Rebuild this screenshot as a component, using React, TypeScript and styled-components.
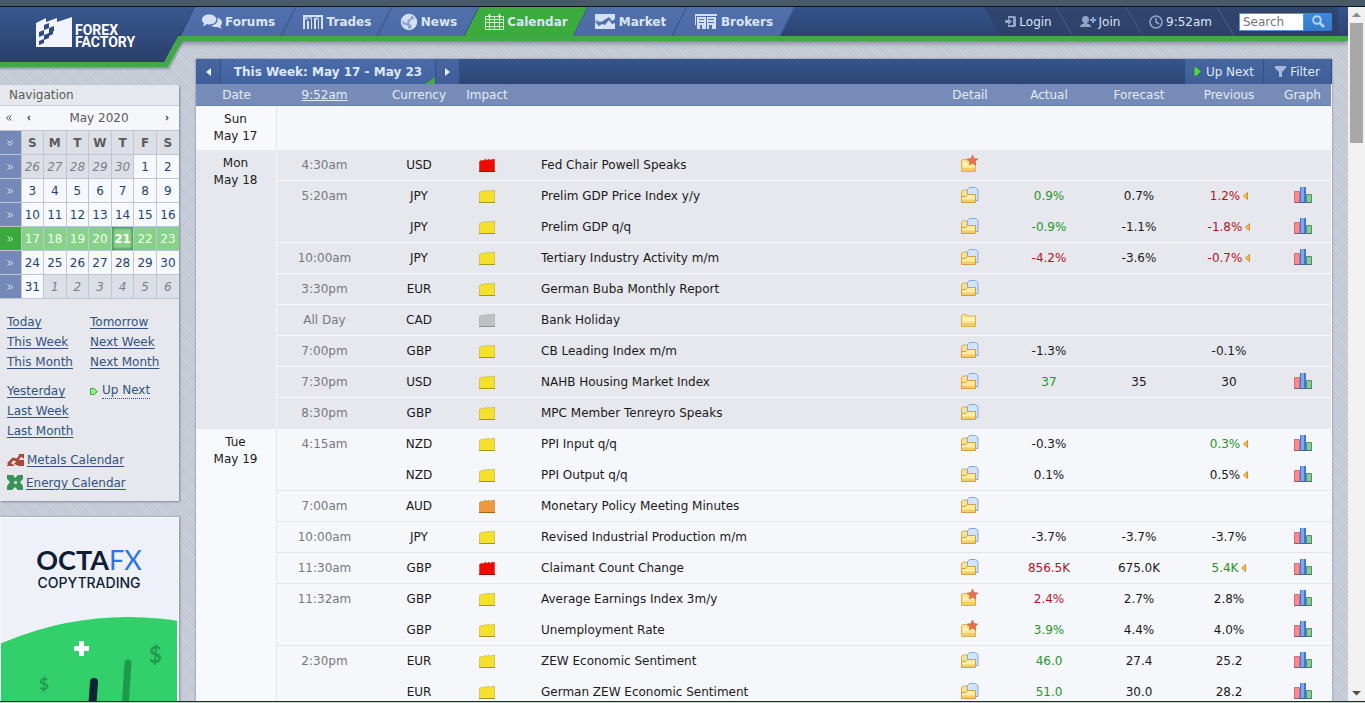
import React from "react";
import styled, { createGlobalStyle, css } from "styled-components";

const Global = createGlobalStyle`
  *, *::before, *::after { box-sizing: border-box; }
  body { margin: 0; }
  body, button, input, table { font-family: Verdana, "DejaVu Sans", sans-serif; font-size: 12px; }
  button { border: 0; padding: 0; background: none; color: inherit; cursor: pointer; }
  a { color: inherit; }
  svg { display: block; flex: none; }
`;

/* ---------- window frame ---------- */

const Frame = styled.div`
  display: flex;
  flex-direction: column;
  height: 100vh;
  overflow: hidden;
`;
const TopStrip = styled.div`
  flex: none;
  height: 7px;
  background: #475a66;
  border-bottom: 1px solid #0c1420;
`;
const BottomStrip = styled.div`
  flex: none;
  height: 2px;
  background: #c9d3cb;
  border-top: 1px solid #17331f;
`;
const Middle = styled.div`
  flex: 1;
  min-height: 0;
  display: flex;
`;
const Page = styled.div`
  flex: 1;
  min-width: 0;
  overflow: hidden;
  background: repeating-linear-gradient(45deg, #c2c9d4 0 2px, #ccd1da 2px 3px);
`;
const ScrollTrack = styled.div`
  flex: none;
  width: 17px;
  padding: 5px 2px;
  background: #f1f1f1;
  display: flex;
  flex-direction: column;
  align-items: center;
  gap: 5px;
`;
const ScrollThumb = styled.div`
  width: 13px;
  height: 120px;
  margin-bottom: auto;
  background: #a8a8a8;
`;

/* ---------- header ---------- */

const Header = styled.header`
  display: flex;
  align-items: flex-start;
  height: 34px;
  background: linear-gradient(#34538b, #2c4373);
  border-bottom: 5px solid #40a845;
  box-shadow: 0 2px 5px rgba(40, 50, 70, 0.5);
`;
const LogoLink = styled.a`
  position: relative;
  z-index: 2;
  display: grid;
  flex: none;
  width: 196px;
  height: 64px;
  color: #fff;
  text-decoration: none;
  & > * { grid-area: 1 / 1; }
`;
const LogoContent = styled.span`
  display: flex;
  align-items: flex-start;
  gap: 3px;
  padding: 10px 0 0 36px;
`;
const LogoName = styled.span`
  display: flex;
  flex-direction: column;
  margin-top: 7px;
  font: 700 14px/12px Roboto, sans-serif;
`;
const Nav = styled.nav`
  display: flex;
  height: 29px;
  margin-left: -8px;
`;
const Tab = styled.a<{ $w: number; $active?: boolean }>`
  position: relative;
  z-index: 1;
  display: flex;
  align-items: center;
  justify-content: center;
  gap: 3px;
  width: ${(p) => p.$w}px;
  color: #dbe6f8;
  font-weight: 700;
  text-decoration: none;
  &::before {
    content: "";
    position: absolute;
    inset: 0;
    z-index: -1;
    transform: skewX(-27deg);
    background: ${(p) => (p.$active ? "#3aab3c" : "linear-gradient(#5070ac, #4c6aa5)")};
    border-right: 1px solid #3d5993;
  }
`;
const UserArea = styled.div`
  position: relative;
  z-index: 1;
  display: flex;
  height: 29px;
  margin-left: auto;
  margin-right: 10px;
  color: #dbe6f8;
  background: linear-gradient(#30466f, #2d4069) no-repeat right / calc(100% - 12px) 100%;
`;
const UserItem = styled.a<{ $w: number }>`
  position: relative;
  z-index: 1;
  display: flex;
  align-items: center;
  justify-content: center;
  gap: 3px;
  width: ${(p) => p.$w}px;
  text-decoration: none;
  &::before {
    content: "";
    position: absolute;
    inset: 0;
    z-index: -1;
    transform: skewX(30deg);
    background: linear-gradient(#30466f, #2d4069);
    border-right: 1px solid #4d638f;
  }
`;
const Search = styled.form`
  position: relative;
  z-index: 1;
  display: flex;
  align-items: center;
  padding: 0 6px 0 13px;
`;
const SearchInput = styled.input`
  width: 65px;
  height: 18px;
  padding: 0 3px;
  border: 1px solid #5d93d6;
  background: #fff;
  &::placeholder { color: #757575; }
`;
const SearchButton = styled.button`
  width: 28px;
  height: 18px;
  display: grid;
  place-items: center;
  background: linear-gradient(#3f8ade, #3478cb);
  border-radius: 0 2px 2px 0;
`;

/* ---------- layout ---------- */

const Columns = styled.div`
  display: flex;
  align-items: flex-start;
  gap: 17px;
  padding-right: 16px;
`;
const Sidebar = styled.aside`
  flex: none;
  width: 179px;
  margin-top: 44px;
  display: flex;
  flex-direction: column;
  gap: 16px;
`;
const Main = styled.main`
  flex: 1;
  min-width: 0;
  margin-top: 18px;
  box-shadow: 0 0 2px rgba(50, 65, 100, 0.6);
`;

/* ---------- sidebar ---------- */

const Box = styled.section`
  background: #e6e8ed;
  box-shadow: 1px 1px 2px rgba(60, 70, 100, 0.5);
  color: #5a5a5a;
`;
const BoxTitle = styled.h2`
  margin: 0;
  padding: 0 9px;
  height: 21px;
  font-size: 12px;
  line-height: 20px;
  font-weight: 400;
  border-bottom: 1px solid #c6cad3;
`;
const MonthBar = styled.div`
  display: flex;
  align-items: center;
  height: 24px;
  padding: 0 6px 0 5px;
  background: #f6f7fa;
  color: #35506f;
`;
const MonthName = styled.span`
  flex: 1;
  text-align: center;
  color: #5a5a5a;
`;
const StepButton = styled.button`
  width: 10px;
  height: 20px;
  & + & { margin-left: 10px; }
`;
const MiniTable = styled.table`
  width: 100%;
  table-layout: fixed;
  border-collapse: collapse;
  text-align: center;
`;
const DayHead = styled.th`
  height: 24px;
  padding: 0;
  background: #dcdfe6;
  border: 1px solid #bfc5d5;
  border-right: 0;
`;
const WeekCell = styled.td<{ $on?: boolean }>`
  width: 21px;
  height: 24px;
  padding: 0;
  color: #dfe8f8;
  background: ${(p) => (p.$on ? "#38a93a" : "#7489b7")};
  border-top: 1px solid #bfc5d5;
  border-bottom: 1px solid #bfc5d5;
`;
const DayCell = styled.td<{ $kind: "out" | "in" | "week" | "today" }>`
  height: 24px;
  padding: 0;
  border: 1px solid #bfc5d5;
  border-right: 0;
  background: #f6f8fc;
  color: #1f4470;
  ${(p) => p.$kind === "out" && css`background: #dcdfe6; color: #7c7f86; font-style: italic;`}
  ${(p) => p.$kind === "week" && css`background: #87d287; color: #f2fff0;`}
  ${(p) => p.$kind === "today" && css`background: #87d287; color: #fff; font-weight: 700; box-shadow: inset 0 0 3px 1px #3f8b45;`}
`;
const CellButton = styled.button`
  display: grid;
  place-items: center;
  width: 100%;
  height: 23px;
  font-style: inherit;
  font-weight: inherit;
`;
const Links = styled.div`
  display: grid;
  grid-template-columns: 83px 1fr;
  align-items: start;
  row-gap: 9px;
  padding: 13px 0 0 7px;
  color: #33527f;
`;
const LinkList = styled.div`
  display: flex;
  flex-direction: column;
  align-items: flex-start;
  line-height: 20px;
  a { white-space: nowrap; text-underline-offset: 2px; }
`;
const Partners = styled.div`
  display: flex;
  flex-direction: column;
  padding: 7px;
  color: #33527f;
`;
const IconLink = styled.span`
  display: flex;
  align-items: center;
  gap: 3px;
  height: 23px;
  a { text-underline-offset: 2px; }
`;
const DottedLink = styled.a`
  line-height: 15px;
  text-decoration: none;
  border-bottom: 1px dotted #33527f;
`;
const NextRow = styled.div`
  display: flex;
  align-items: center;
  gap: 4px;
  height: 20px;
`;
const Ad = styled.a`
  display: flex;
  flex-direction: column;
  padding: 28px 1px 0 0;
  background: #eef2f8;
  border: solid #f6f8fb;
  border-width: 1px 1px 0 1px;
  box-shadow: 1px 0 2px rgba(60, 70, 100, 0.5);
  text-align: center;
  text-decoration: none;
  color: #0f1c33;
`;
const AdBrand = styled.span`
  font: 700 27px/27px Lato, sans-serif;
  b { font-weight: 400; color: #2f74e6; }
`;
const AdLine = styled.span`
  margin-bottom: 7px;
  font: 500 14px/20px Inter, sans-serif;
`;

/* ---------- calendar ---------- */

const TitleBar = styled.div`
  display: flex;
  height: 25px;
  background: linear-gradient(#365489, #2d4576);
  color: #dfe9fb;
`;
const BarButton = styled.button<{ $w: number; $title?: boolean }>`
  position: relative;
  display: flex;
  align-items: center;
  justify-content: center;
  gap: 4px;
  width: ${(p) => p.$w}px;
  border-right: 1px solid #34508a;
  background: ${(p) => (p.$title ? "linear-gradient(#4a6baa, #4263a0)" : "linear-gradient(#47669f, #3f5d98)")};
  font-weight: ${(p) => (p.$title ? 700 : 400)};
`;
const Corner = styled.svg`
  position: absolute;
  right: 0;
  bottom: 0;
`;
const BarGap = styled.div`
  flex: 1;
`;
const EventTable = styled.table`
  width: 100%;
  table-layout: fixed;
  border-collapse: separate;
  border-spacing: 0;
  background: #f5f7fb;
  border-right: 1px solid #f8fafd;
  color: #1a1a1a;
`;
const Head = styled.th`
  height: 22px;
  padding: 0;
  font-weight: 400;
  color: #e3ebfa;
  background: #768bb8;
  border-bottom: 1px solid #6a7fae;
`;
const DateCell = styled.td<{ $alt: boolean }>`
  padding: 5px 1px 0 0;
  vertical-align: top;
  text-align: center;
  line-height: 17px;
  background: ${(p) => (p.$alt ? "#e6e8ed" : "#f7f9fc")};
  border-right: 1px solid ${(p) => (p.$alt ? "#f6f8fb" : "#e1e4ea")};
`;
type CellProps = { $alt: boolean; $line?: boolean; $tone?: string };
const tones: Record<string, string> = { g: "#259629", r: "#b4141e", t: "#77797e" };
const Cell = styled.td<CellProps>`
  height: 31px;
  padding: 0;
  text-align: center;
  white-space: nowrap;
  background: ${(p) => (p.$alt ? "#e6e8ed" : "#f5f7fb")};
  border-bottom: 1px solid
    ${(p) => (!p.$line ? "transparent" : p.$alt ? "#f7f9fc" : "#e1e4ea")};
  color: ${(p) => (p.$tone ? tones[p.$tone] : "inherit")};
  & > svg, & > button { margin: 0 auto; display: block; }
`;
const NameCell = styled(Cell)`
  padding-left: 33px;
  text-align: left;
`;
const EmptyCell = styled.td`
  height: 44px;
`;
const Revised = styled.span`
  display: inline-flex;
  align-items: center;
  gap: 3px;
`;

/* ---------- icons ---------- */

const ink = "#d3e0f5";

const navIcons: Record<string, React.ReactNode> = {
  Forums: (
    <svg width="20" height="16" viewBox="0 0 21 16" fill={ink}>
      <path d="M7.500 0C12 0 15 2.200 15 5.300s-3 5.200-7.500 5.200c-1 0-1.800 0-2.500-.3C3.700 11.800 2 12.300.5 12.300c1-.8 1.500-1.800 1.500-2.900C.8 8.400 0 7 0 5.300 0 2.200 3 0 7.500 0z" />
      <path d="M16 3.500c2.800.5 5 2.400 5 5 0 1.300-.6 2.500-1.600 3.300 0 1.200.5 2.200 1.300 3-1.600 0-3-.5-3.900-1.500-3 .5-5.700-.1-7-1.500C13.600 11.200 16.400 9 16.400 5.500c0-.7-.1-1.400-.4-2z" />
    </svg>
  ),
  Trades: (
    <svg width="21" height="15" viewBox="0 0 21 15" fill={ink}>
      <path d="M0 1h20v2H0zM0 2h2v13H0zM4 7h2v8H4zM8 5h1v10H8zM11 4h2v11h-2zM15 6h1v9h-1zM18 2h2v13h-2z" />
      <path d="M2 3h3v3H2zM6 3h3v2H6zM13 3h3v3h-3z" opacity=".6" />
    </svg>
  ),
  News: (
    <svg width="18" height="18" viewBox="0 0 18 18">
      <circle cx="9" cy="9" r="7.500" fill="#8ba4d2" stroke={ink} strokeWidth="1.500" />
      <path d="M8 1l3 2-1 3-3 1 1 2-2 1-3-2-1-2 2-3zM11 7l5-2 1 4-2 4-3 3-1-4-2-2zM3 11l5 2v4l-4-3z" fill={ink} />
    </svg>
  ),
  Calendar: (
    <svg width="19" height="16" viewBox="0 0 19 16" fill="none" stroke="#c9f0c4" strokeWidth="1">
      <path d="M.5 2.500h18v13H.5zM.5 5.500h18M.5 8.500h18M.5 12.500h18M4.500 2.500v13M9.500 2.500v13M14.500 2.500v13" />
      <path d="M4.500 0v4M14.500 0v4" strokeWidth="2" />
    </svg>
  ),
  Market: (
    <svg width="21" height="15" viewBox="0 0 21 15">
      <path d="M0 0h20v15H0z" fill={ink} />
      <path d="M0 5l5 3 3-1 6-4 3 4 3-2v4l-3 1-3-4-4 5-3-1-3 2-4-4v-1l4 2z" fill="#4e6eac" />
    </svg>
  ),
  Brokers: (
    <svg width="23" height="16" viewBox="0 0 23 16">
      <path d="M0 0h22v2H0zM2 3h19v12H2zM0 2h1v9H0z" fill={ink} />
      <path d="M4 5h5v1H4zM4 8h5v1H4zM13 5h6v1h-6zM13 8h6v1h-6zM5 11h2v4H5zM14 11h3v4h-3zM11 3h1v12h-1z" fill="#4e6eac" />
    </svg>
  ),
};

const dim = "#93a5c6";
const LoginIcon = () => (
  <svg width="11" height="11" viewBox="0 0 11 11" fill={dim}>
    <path d="M3 0h7l1 1v9l-1 1H3V9h5V2H3z" />
    <path d="M0 4h3V2l4 3.500L3 9V7H0z" />
  </svg>
);
const JoinIcon = () => (
  <svg width="16" height="12" viewBox="0 0 16 12" fill={dim}>
    <ellipse cx="5.500" cy="3.500" rx="3.500" ry="3.500" />
    <path d="M0 11c0-2 1.500-3 4-3.500V5h3v2.500c2.500.5 4 1.500 4 3.500zM10 3h2V1h2v2h2v2h-2v2h-2V5h-2z" />
  </svg>
);
const ClockIcon = () => (
  <svg width="14" height="14" viewBox="0 0 14 14" fill="none" stroke={dim} strokeWidth="1.600">
    <circle cx="7" cy="7" r="6" />
    <path d="M7 3v4l3 2" />
  </svg>
);
const SearchIcon = () => (
  <svg width="13" height="13" viewBox="0 0 13 13" fill="none" stroke="#b3d2f7" strokeWidth="2">
    <circle cx="5" cy="5" r="3.800" />
    <path d="M8 8l4 4" strokeWidth="2.500" />
  </svg>
);
const LogoShape = () => (
  <svg width="196" height="64" viewBox="0 0 196 64">
    <defs>
      <linearGradient id="logoFill" x1="0" y1="0" x2="0" y2="1">
        <stop offset="0" stopColor="#38588f" />
        <stop offset="1" stopColor="#2a3f6c" />
      </linearGradient>
    </defs>
    <path d="M0 61.500h169l14-27" fill="none" stroke="#56617a" strokeOpacity=".35" strokeWidth="2" />
    <path d="M0 0h194L164.500 55H0z" fill="url(#logoFill)" />
    <path d="M0 55h164.500L178.500 29H194v5h-11.500L168 60.500H0z" fill="#40a845" />
  </svg>
);
const FactoryIcon = () => (
  <svg width="36" height="31" viewBox="0 0 36 31">
    <path d="M0 6l10-5v4l11-4v4l15-5v30H0z" fill="#f1f4fa" />
    <path d="M8 8l5-2v5l-5 2zM13 11l5-2v5l-5 2zM3 15l5-2v5l-5 2zM8 18l5-2v5l-5 2zM13 16l4-2v3l-4 2zM3 24l5-2v4l-5 2z" fill="#2f4a80" />
  </svg>
);
const Triangle = ({ left }: { left?: boolean }) => (
  <svg width="5" height="8" viewBox="0 0 5 8">
    <path d={left ? "M5 0v8L0 4z" : "M0 0v8l5-4z"} fill="#e8f0ff" />
  </svg>
);
const PlayIcon = ({ solid }: { solid?: boolean }) => (
  <svg width="8" height="9" viewBox="0 0 8 9">
    <path
      d={solid ? "M.5.5h2l4 4-4 4h-2z" : "M.5 1.500h3.500l3.500 3-3.500 3H.5z"}
      fill={solid ? "#5fd050" : "#9be890"}
      stroke="#2fae33"
    />
  </svg>
);
const FunnelIcon = () => (
  <svg width="11" height="11" viewBox="0 0 11 11">
    <path d="M0 0h11v2L7 6v5H4V6L0 2z" fill="#a6b9dd" />
  </svg>
);
const Chevrons = ({ down, left }: { down?: boolean; left?: boolean }) => (
  <svg
    width="8"
    height="8"
    viewBox="0 0 8 8"
    fill="none"
    stroke="currentColor"
    strokeWidth="1"
  >
    <path d={down ? "M1.500 1.500L4 4l2.500-2.500M1.500 4L4 6.500 6.500 4" : left ? "M4 1.500L1.500 4 4 6.500M6.500 1.500L4 4l2.500 2.500" : "M1.500 1.500L4 4 1.500 6.500M4 1.500L6.500 4 4 6.500"} />
  </svg>
);
const Chevron = ({ left }: { left?: boolean }) => (
  <svg width="8" height="8" viewBox="0 0 8 8" fill="none" stroke="currentColor" strokeWidth="1.200">
    <path d={left ? "M5 2L3 4l2 2" : "M3 2l2 2-2 2"} />
  </svg>
);
const MetalsIcon = () => (
  <svg width="17" height="16" viewBox="0 0 17 16">
    <path d="M1 12l5-5 4 1 4-5" fill="none" stroke="#a8483c" strokeWidth="2.500" />
    <path d="M11 2h6v5zM7 12l3-4h7v6h-5zM0 13l4-2 3 2v1H0z" fill="#a8483c" />
  </svg>
);
const EnergyIcon = () => (
  <svg width="16" height="15" viewBox="0 0 16 15">
    <path d="M0 0h6l2 3 3-3h5v4l-3 3 3 4v4h-5l-3-3-3 3H0v-4l3-4-3-3z" fill="#3a9159" />
    <path d="M7 6h3v3H7z" fill="#b6dcc4" />
  </svg>
);

const impactColors: Record<string, [string, string]> = {
  r: ["#f00a00", "#a80c00"],
  y: ["#f5e12a", "#a8961a"],
  o: ["#f0983a", "#a5611a"],
  n: ["#bfc1c4", "#8f9194"],
};
const ImpactIcon = ({ kind }: { kind: string }) => (
  <svg width="16" height="14" viewBox="0 0 16 14" aria-hidden="true">
    <path
      d="M.5 13.500V3.500L3 2l1 1 2.500-2 1 1.500L10 1l1 1.500L13.500 1l.5 1 1.500-1v12.500z"
      fill={impactColors[kind][0]}
      stroke={impactColors[kind][1]}
      strokeOpacity=".4"
      strokeWidth="1"
    />
    <path d="M0 13h16v1H0z" fill={impactColors[kind][1]} />
  </svg>
);
const FolderBase = () => (
  <>
    <path d="M.5 15.500v-11L2 3.500h3.500L7 5h7.500v10.500z" fill="#fae68e" stroke="#dcae5c" />
    <path d="M2 7h6l1-1h5v4H2z" fill="#fdf3b4" />
    <path d="M1 12h13v3H1z" fill="#f3cf62" />
  </>
);
const DetailIcon = ({ kind }: { kind: string }) => (
  <svg width="18" height="20" viewBox="0 -1 18 20" aria-hidden="true">
    {kind === "doc" && (
      <>
        <path d="M.5 15.500V4L2 3h4l1.500 2H12v10.500z" fill="#f9e08a" stroke="#dcae5c" />
        <path d="M6.500 2.500l2-2h6l2.500 2v11h-3l-1-5H6.500z" fill="#d3e4fa" stroke="#82a8e2" />
        <path d="M.5 15.500V9.500h4L6.500 7.500h8v8z" fill="#fcee9e" stroke="#d39d4c" />
        <path d="M1 12.500h13V15H1z" fill="#f3cf62" />
      </>
    )}
    {kind === "plain" && <FolderBase />}
    {kind === "star" && (
      <>
        <FolderBase />
        <path d="M11.500-1l1.500 3.500 4 .5-3 2.500.8 3.700-3.300-1.900-3.300 1.900L9 5.500 6 3l4-.5z" fill="#e8704a" stroke="#c8573a" strokeWidth=".5" />
      </>
    )}
  </svg>
);
const GraphIcon = () => (
  <svg width="18" height="20" viewBox="0 0 18 20" aria-hidden="true">
    <path d="M.5 5.500h5v11h-5z" fill="#f08e92" stroke="#dc6870" />
    <path d="M12.500 8.500h5v8h-5z" fill="#8cc79a" stroke="#4b9463" />
    <path d="M6 1h6v16H6z" fill="#4676cc" />
    <path d="M7 1h3v15H7z" fill="#7ba8ee" />
    <path d="M0 16h18v1H0z" fill="#3a4f80" fillOpacity=".5" />
  </svg>
);
const RevisedIcon = () => (
  <svg width="5" height="8" viewBox="0 0 5 8">
    <path d="M4.500.5v7L.5 4z" fill="#f3c04a" stroke="#d0922a" />
  </svg>
);

/* ---------- data ---------- */

const tabs: [string, number][] = [
  ["Forums", 101],
  ["Trades", 96],
  ["News", 87],
  ["Calendar", 109],
  ["Market", 99],
  ["Brokers", 108],
];

const weeks: [string, number[]][] = [
  ["first", [26, 27, 28, 29, 30, 1, 2]],
  ["in", [3, 4, 5, 6, 7, 8, 9]],
  ["in", [10, 11, 12, 13, 14, 15, 16]],
  ["current", [17, 18, 19, 20, 21, 22, 23]],
  ["in", [24, 25, 26, 27, 28, 29, 30]],
  ["last", [31, 1, 2, 3, 4, 5, 6]],
];

type Event = {
  time?: string;
  cur: string;
  impact: string;
  name: string;
  detail?: string;
  actual?: string;
  tone?: string;
  forecast?: string;
  previous?: string;
  prevTone?: string;
  revised?: boolean;
  graph?: boolean;
};
type Day = { day: string; date: string; alt: boolean; events: Event[] };

const days: Day[] = [
  { day: "Sun", date: "May 17", alt: false, events: [] },
  {
    day: "Mon",
    date: "May 18",
    alt: true,
    events: [
      { time: "4:30am", cur: "USD", impact: "r", name: "Fed Chair Powell Speaks", detail: "star" },
      { time: "5:20am", cur: "JPY", impact: "y", name: "Prelim GDP Price Index y/y", actual: "0.9%", tone: "g", forecast: "0.7%", previous: "1.2%", prevTone: "r", revised: true, graph: true },
      { cur: "JPY", impact: "y", name: "Prelim GDP q/q", actual: "-0.9%", tone: "g", forecast: "-1.1%", previous: "-1.8%", prevTone: "r", revised: true, graph: true },
      { time: "10:00am", cur: "JPY", impact: "y", name: "Tertiary Industry Activity m/m", actual: "-4.2%", tone: "r", forecast: "-3.6%", previous: "-0.7%", prevTone: "r", revised: true, graph: true },
      { time: "3:30pm", cur: "EUR", impact: "y", name: "German Buba Monthly Report" },
      { time: "All Day", cur: "CAD", impact: "n", name: "Bank Holiday", detail: "plain" },
      { time: "7:00pm", cur: "GBP", impact: "y", name: "CB Leading Index m/m", actual: "-1.3%", previous: "-0.1%" },
      { time: "7:30pm", cur: "USD", impact: "y", name: "NAHB Housing Market Index", actual: "37", tone: "g", forecast: "35", previous: "30", graph: true },
      { time: "8:30pm", cur: "GBP", impact: "y", name: "MPC Member Tenreyro Speaks" },
    ],
  },
  {
    day: "Tue",
    date: "May 19",
    alt: false,
    events: [
      { time: "4:15am", cur: "NZD", impact: "y", name: "PPI Input q/q", actual: "-0.3%", previous: "0.3%", prevTone: "g", revised: true, graph: true },
      { cur: "NZD", impact: "y", name: "PPI Output q/q", actual: "0.1%", previous: "0.5%", revised: true, graph: true },
      { time: "7:00am", cur: "AUD", impact: "o", name: "Monetary Policy Meeting Minutes" },
      { time: "10:00am", cur: "JPY", impact: "y", name: "Revised Industrial Production m/m", actual: "-3.7%", forecast: "-3.7%", previous: "-3.7%", graph: true },
      { time: "11:30am", cur: "GBP", impact: "r", name: "Claimant Count Change", actual: "856.5K", tone: "r", forecast: "675.0K", previous: "5.4K", prevTone: "g", revised: true, graph: true },
      { time: "11:32am", cur: "GBP", impact: "y", name: "Average Earnings Index 3m/y", detail: "star", actual: "2.4%", tone: "r", forecast: "2.7%", previous: "2.8%", graph: true },
      { cur: "GBP", impact: "y", name: "Unemployment Rate", detail: "star", actual: "3.9%", tone: "g", forecast: "4.4%", previous: "4.0%", graph: true },
      { time: "2:30pm", cur: "EUR", impact: "y", name: "ZEW Economic Sentiment", actual: "46.0", tone: "g", forecast: "27.4", previous: "25.2", graph: true },
      { cur: "EUR", impact: "y", name: "German ZEW Economic Sentiment", actual: "51.0", tone: "g", forecast: "30.0", previous: "28.2", graph: true },
    ],
  },
];

const DateLabel = ({ d }: { d: Day }) => (
  <DateCell $alt={d.alt} rowSpan={d.events.length || 1}>
    {d.day}
    <br />
    {d.date}
  </DateCell>
);

const EventRow = ({ d, i }: { d: Day; i: number }) => {
  const e = d.events[i];
  const next = d.events[i + 1];
  const p = { $alt: d.alt, $line: !!next && !!next.time };
  return (
    <tr>
      {i === 0 && <DateLabel d={d} />}
      <Cell {...p} $tone="t">{e.time}</Cell>
      <Cell {...p}>{e.cur}</Cell>
      <Cell {...p}><ImpactIcon kind={e.impact} /></Cell>
      <NameCell {...p}>{e.name}</NameCell>
      <Cell {...p}>
        <button type="button" aria-label={"Open detail: " + e.name}><DetailIcon kind={e.detail || "doc"} /></button>
      </Cell>
      <Cell {...p} $tone={e.tone}>{e.actual}</Cell>
      <Cell {...p}>{e.forecast}</Cell>
      <Cell {...p} $tone={e.prevTone}>
        {e.revised ? <Revised>{e.previous}<RevisedIcon /></Revised> : e.previous}
      </Cell>
      <Cell {...p}>
        {e.graph && <button type="button" aria-label={"Open graph: " + e.name}><GraphIcon /></button>}
      </Cell>
    </tr>
  );
};

const dayKind = (row: string, n: number) => {
  if (row === "current") return n === 21 ? "today" : "week";
  if (row === "first" && n > 20) return "out";
  if (row === "last" && n < 20) return "out";
  return "in";
};

const MiniCalendar = () => (
  <Box>
    <BoxTitle>Navigation</BoxTitle>
    <MonthBar>
      <StepButton type="button" aria-label="Previous year"><Chevrons left /></StepButton>
      <StepButton type="button" aria-label="Previous month"><Chevron left /></StepButton>
      <MonthName>May 2020</MonthName>
      <StepButton type="button" aria-label="Next month"><Chevron /></StepButton>
    </MonthBar>
    <MiniTable>
      <tbody>
        <tr>
          <WeekCell><CellButton type="button" aria-label="Whole month"><Chevrons down /></CellButton></WeekCell>
          {["S", "M", "T", "W", "T", "F", "S"].map((d, i) => <DayHead key={i}>{d}</DayHead>)}
        </tr>
        {weeks.map(([row, nums], w) => (
          <tr key={w}>
            <WeekCell $on={row === "current"}>
              <CellButton type="button" aria-label={"Week " + (w + 1)}><Chevrons /></CellButton>
            </WeekCell>
            {nums.map((n) => (
              <DayCell key={n} $kind={dayKind(row, n)}><CellButton type="button">{n}</CellButton></DayCell>
            ))}
          </tr>
        ))}
      </tbody>
    </MiniTable>
    <Links>
      <LinkList>
        <a href="#today">Today</a>
        <a href="#this-week">This Week</a>
        <a href="#this-month">This Month</a>
      </LinkList>
      <LinkList>
        <a href="#tomorrow">Tomorrow</a>
        <a href="#next-week">Next Week</a>
        <a href="#next-month">Next Month</a>
      </LinkList>
      <LinkList>
        <a href="#yesterday">Yesterday</a>
        <a href="#last-week">Last Week</a>
        <a href="#last-month">Last Month</a>
      </LinkList>
      <NextRow><PlayIcon /><DottedLink href="#up-next">Up Next</DottedLink></NextRow>
    </Links>
    <Partners>
      <IconLink><MetalsIcon /><a href="#metals">Metals Calendar</a></IconLink>
      <IconLink><EnergyIcon /><a href="#energy">Energy Calendar</a></IconLink>
    </Partners>
  </Box>
);

const AdArt = () => (
  <svg viewBox="0 0 176 140" width="100%">
    <circle cx="127" cy="335" r="318" fill="#31d06b" />
    <path d="M78 41h5v5h5v5h-5v5h-5v-5h-5v-5h5z" fill="#fff" />
    <path d="M127 63l-6 90" stroke="#1e9a4c" strokeWidth="7" strokeLinecap="round" />
    <path d="M93 82l-5 70" stroke="#0f2233" strokeWidth="8" strokeLinecap="round" />
    <g fill="#1f9c4f" fontFamily="Lato, sans-serif" fontWeight="700">
      <text x="148" y="63" fontSize="22">$</text>
      <text x="38" y="90" fontSize="17">$</text>
    </g>
  </svg>
);

export default function App() {
  return (
    <>
      <Global />
      <Frame>
        <TopStrip />
        <Middle>
          <Page>
            <Header>
              <LogoLink href="#home">
                <LogoShape />
                <LogoContent>
                  <FactoryIcon />
                  <LogoName><span>FOREX</span><span>FACTORY</span></LogoName>
                </LogoContent>
              </LogoLink>
              <Nav>
                {tabs.map(([name, w]) => (
                  <Tab key={name} href={"#" + name.toLowerCase()} $w={w} $active={name === "Calendar"}>
                    {navIcons[name]}
                    {name}
                  </Tab>
                ))}
              </Nav>
              <UserArea>
                <UserItem href="#login" $w={73}><LoginIcon />Login</UserItem>
                <UserItem href="#join" $w={70}><JoinIcon />Join</UserItem>
                <UserItem href="#time" $w={91}><ClockIcon />9:52am</UserItem>
                <Search>
                  <SearchInput type="text" placeholder="Search" aria-label="Search" />
                  <SearchButton type="button" aria-label="Run search"><SearchIcon /></SearchButton>
                </Search>
              </UserArea>
            </Header>
            <Columns>
              <Sidebar>
                <MiniCalendar />
                <Ad href="#ad">
                  <AdBrand>OCTA<b>FX</b></AdBrand>
                  <AdLine>COPYTRADING</AdLine>
                  <AdArt />
                </Ad>
              </Sidebar>
              <Main>
                <TitleBar>
                  <BarButton type="button" $w={25} aria-label="Previous week"><Triangle left /></BarButton>
                  <BarButton type="button" $w={215} $title>
                    This Week: May 17 - May 23
                    <Corner width="10" height="7" viewBox="0 0 10 7"><path d="M0 7L10 0v7z" fill="#3fae3f" /></Corner>
                  </BarButton>
                  <BarButton type="button" $w={24} aria-label="Next week"><Triangle /></BarButton>
                  <BarGap />
                  <BarButton type="button" $w={79}><PlayIcon solid />Up Next</BarButton>
                  <BarButton type="button" $w={68}><FunnelIcon />Filter</BarButton>
                </TitleBar>
                <EventTable>
                  <colgroup>
                    <col width="81" />
                    <col width="95" />
                    <col width="94" />
                    <col width="42" />
                    <col />
                    <col width="68" />
                    <col width="90" />
                    <col width="90" />
                    <col width="90" />
                    <col width="57" />
                  </colgroup>
                  <thead>
                    <tr>
                      <Head>Date</Head>
                      <Head><a href="#time">9:52am</a></Head>
                      <Head>Currency</Head>
                      <Head>Impact</Head>
                      <Head />
                      <Head>Detail</Head>
                      <Head>Actual</Head>
                      <Head>Forecast</Head>
                      <Head>Previous</Head>
                      <Head>Graph</Head>
                    </tr>
                  </thead>
                  <tbody>
                    {days.map((d) =>
                      d.events.length ? (
                        d.events.map((_, i) => <EventRow key={d.day + i} d={d} i={i} />)
                      ) : (
                        <tr key={d.day}>
                          <DateLabel d={d} />
                          <EmptyCell colSpan={9} />
                        </tr>
                      )
                    )}
                  </tbody>
                </EventTable>
              </Main>
            </Columns>
          </Page>
          <ScrollTrack>
            <svg width="9" height="6" viewBox="0 0 9 6"><path d="M0 5l4.500-4.500L9 5z" fill="#8a8a8a" /></svg>
            <ScrollThumb />
            <svg width="9" height="6" viewBox="0 0 9 6"><path d="M0 1l4.500 4.500L9 1z" fill="#505050" /></svg>
          </ScrollTrack>
        </Middle>
        <BottomStrip />
      </Frame>
    </>
  );
}
